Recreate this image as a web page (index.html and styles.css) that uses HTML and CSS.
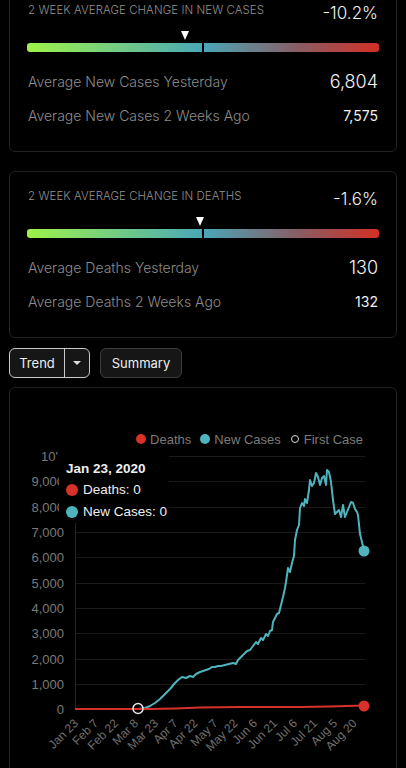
FILE: index.html
```html
<!DOCTYPE html>
<html>
	<head>
		<meta charset="UTF-8">
		<title>Trend</title>
		<link rel="stylesheet" href="styles.css">
	</head>
	<body>
		<div class="page">
			<section class="stat-card">
				<div class="stat-head">
					<span class="stat-title">2 Week Average Change in New Cases</span>
					<span class="stat-pct">-10.2%</span>
				</div>
				<div class="meter">
					<span class="meter-mark" style="left: 44.9%"></span>
					<div class="meter-bar"><span class="meter-good"></span><span class="meter-bad"></span></div>
				</div>
				<div class="stat-row">
					<span class="stat-label">Average New Cases Yesterday</span>
					<span class="stat-big">6,804</span>
				</div>
				<div class="stat-row stat-row-sub">
					<span class="stat-label">Average New Cases 2 Weeks Ago</span>
					<span class="stat-small">7,575</span>
				</div>
			</section>

			<section class="stat-card">
				<div class="stat-head">
					<span class="stat-title">2 Week Average Change in Deaths</span>
					<span class="stat-pct">-1.6%</span>
				</div>
				<div class="meter">
					<span class="meter-mark" style="left: 49.1%"></span>
					<div class="meter-bar"><span class="meter-good"></span><span class="meter-bad"></span></div>
				</div>
				<div class="stat-row">
					<span class="stat-label">Average Deaths Yesterday</span>
					<span class="stat-big">130</span>
				</div>
				<div class="stat-row stat-row-sub">
					<span class="stat-label">Average Deaths 2 Weeks Ago</span>
					<span class="stat-small">132</span>
				</div>
			</section>

			<div class="tabs">
				<div class="tab-group">
					<a class="tab tab-main" href="javascript:;">Trend</a>
					<a class="tab tab-caret" href="javascript:;"><span class="caret"></span></a>
				</div>
				<a class="tab tab-plain" href="javascript:;">Summary</a>
			</div>

			<section class="chart-card">
				<div class="legend">
					<span class="legend-dot dot-deaths"></span><span class="legend-text">Deaths</span>
					<span class="legend-dot dot-cases"></span><span class="legend-text">New Cases</span>
					<span class="legend-dot dot-first"></span><span class="legend-text">First Case</span>
				</div>

				<svg class="plot" width="386" height="330" viewBox="10 447 386 330">
					<!-- grid -->
					<g stroke="#1a1a1a" stroke-width="1">
						<line x1="75" y1="456.5" x2="365" y2="456.5"/>
						<line x1="75" y1="481.5" x2="365" y2="481.5"/>
						<line x1="75" y1="507.5" x2="365" y2="507.5"/>
						<line x1="75" y1="532.5" x2="365" y2="532.5"/>
						<line x1="75" y1="557.5" x2="365" y2="557.5"/>
						<line x1="75" y1="583.5" x2="365" y2="583.5"/>
						<line x1="75" y1="608.5" x2="365" y2="608.5"/>
						<line x1="75" y1="633.5" x2="365" y2="633.5"/>
						<line x1="75" y1="659.5" x2="365" y2="659.5"/>
						<line x1="75" y1="684.5" x2="365" y2="684.5"/>
					</g>
					<line x1="75.5" y1="456" x2="75.5" y2="709" stroke="#242424"/>

					<g class="y-labels" text-anchor="end">
						<text x="58" y="461">10'</text>
						<text x="64" y="486">9,000</text>
						<text x="64" y="512">8,000</text>
						<text x="64" y="537">7,000</text>
						<text x="64" y="562">6,000</text>
						<text x="64" y="588">5,000</text>
						<text x="64" y="613">4,000</text>
						<text x="64" y="638">3,000</text>
						<text x="64" y="664">2,000</text>
						<text x="64" y="689">1,000</text>
						<text x="64" y="714">0</text>
					</g>

					<g class="x-labels" text-anchor="end">
						<text transform="translate(79 724) rotate(-45)">Jan 23</text>
						<text transform="translate(99 724) rotate(-45)">Feb 7</text>
						<text transform="translate(119 724) rotate(-45)">Feb 22</text>
						<text transform="translate(139 724) rotate(-45)">Mar 8</text>
						<text transform="translate(159 724) rotate(-45)">Mar 23</text>
						<text transform="translate(178.5 724) rotate(-45)">Apr 7</text>
						<text transform="translate(198.5 724) rotate(-45)">Apr 22</text>
						<text transform="translate(218.5 724) rotate(-45)">May 7</text>
						<text transform="translate(238.5 724) rotate(-45)">May 22</text>
						<text transform="translate(258 724) rotate(-45)">Jun 6</text>
						<text transform="translate(278 724) rotate(-45)">Jun 21</text>
						<text transform="translate(298 724) rotate(-45)">Jul 6</text>
						<text transform="translate(318 724) rotate(-45)">Jul 21</text>
						<text transform="translate(338 724) rotate(-45)">Aug 5</text>
						<text transform="translate(357.5 724) rotate(-45)">Aug 20</text>
					</g>

					<!-- new cases -->
					<polyline fill="none" stroke="#4fb3bd" stroke-width="2" stroke-linejoin="round"
						points="75,709 138,709 145,708 150,706 155,703 160,699 165,694 170,689 175,683 178,680 182,677 186,678 190,676 193,677 196,674 200,672 203,671 206,670 209,669 212,667 215,667 218,666 221,666 225,665 229,664 233,663 236,664 238,660 241,657 244,654 247,651 250,650 253,646 256,642 258,644 261,638 263,640 266,634 268,636 270,631 272,630 273,622 275,618 277,614 279,613 281,605 283,597 285,588 286,582 288,568 290,572 292,563 294,556 295,540 297,530 299,525 300,508 302,503 304,506 305,499 307,503 309,490 310,480 312,486 314,483 316,473 318,477 320,485 322,478 324,476 326,485 327,470 329,472 331,482 333,500 335,514 337,512 339,510 341,517 343,505 345,517 347,512 349,507 351,502 353,503 355,509 357,512 358,515 360,534 362,542 364,551"/>
					<!-- deaths -->
					<polyline fill="none" stroke="#d7312a" stroke-width="2"
						points="75,709 150,709 175,708.5 200,707.5 240,707 300,707 330,706.5 364,705.5"/>

					<circle cx="138" cy="708.5" r="5" fill="none" stroke="#e8e8e8" stroke-width="1.5"/>
					<circle cx="364" cy="551" r="5.5" fill="#4fb3bd"/>
					<circle cx="364" cy="706" r="5.5" fill="#d7312a"/>
				</svg>

				<div class="tip">
					<div class="tip-title">Jan 23, 2020</div>
					<div class="tip-row"><span class="tip-dot dot-deaths"></span>Deaths: 0</div>
					<div class="tip-row"><span class="tip-dot dot-cases"></span>New Cases: 0</div>
				</div>
			</section>
		</div>
	</body>
</html>
```

FILE: styles.css
```css
*{
	margin: 0;
	padding: 0;
	box-sizing: border-box;
}
body{
	background: #000;
	color: #eee;
	font-family: Inter, "Noto Sans", sans-serif;
	overflow: hidden;
}
.page{
	margin-top: -15px;
	padding: 0 9px;
}

/* stat cards */
.stat-card{
	border: 1px solid #222;
	border-radius: 6px;
	padding: 17px 18px 23px;
	margin-bottom: 19px;
}
.stat-head{
	display: flex;
	justify-content: space-between;
	align-items: flex-start;
}
.stat-title{
	font-size: 11.4px;
	line-height: 14px;
	font-weight: 300;
	text-transform: uppercase;
	letter-spacing: 0.1px;
	color: #929292;
}
.stat-pct{
	font-size: 17px;
	line-height: 20px;
	font-weight: 300;
	color: #f2f2f2;
}
.meter{
	position: relative;
	margin: 8px -1px 0;
	padding-top: 12px;
}
.meter-mark{
	position: absolute;
	top: 0;
	width: 0;
	height: 0;
	margin-left: -4px;
	border-left: 4px solid transparent;
	border-right: 4px solid transparent;
	border-top: 9px solid #fff;
}
.meter-bar{
	display: flex;
	gap: 2px;
	height: 9px;
}
.meter-good{
	flex: 1;
	border-radius: 3px 0 0 3px;
	background: linear-gradient(to right, #9ef24a, #4aa8b8);
}
.meter-bad{
	flex: 1;
	border-radius: 0 3px 3px 0;
	background: linear-gradient(to right, #4aa6b8, #8b5b62 55%, #d23024);
}
.stat-row{
	display: flex;
	justify-content: space-between;
	align-items: center;
	line-height: 24px;
	margin-top: 18px;
}
.stat-row-sub{
	margin-top: 10px;
}
.stat-label{
	font-size: 14px;
	font-weight: 300;
	color: #8c8c8c;
}
.stat-big{
	font-size: 18px;
	font-weight: 300;
	color: #f4f4f4;
}
.stat-small{
	font-size: 14px;
	color: #f0f0f0;
}

/* tabs */
.tabs{
	display: flex;
	gap: 10px;
	margin-top: -9px;
}
.tab-group{
	display: flex;
	border: 1px solid #c9c9c9;
	border-radius: 6px;
	background: #161616;
}
.tab{
	display: flex;
	align-items: center;
	justify-content: center;
	height: 30px;
	font-size: 13px;
	color: #eee;
	text-decoration: none;
}
.tab-main{
	width: 55px;
	height: 28px;
	border-right: 1px solid #c9c9c9;
}
.tab-caret{
	width: 24px;
	height: 28px;
}
.caret{
	width: 0;
	height: 0;
	border-left: 4px solid transparent;
	border-right: 4px solid transparent;
	border-top: 4px solid #ddd;
}
.tab-plain{
	width: 82px;
	border: 1px solid #3c3c3c;
	border-radius: 6px;
	background: #161616;
}

/* chart */
.chart-card{
	position: relative;
	margin-top: 9px;
	height: 420px;
	border: 1px solid #222;
	border-radius: 6px;
	padding-top: 43px;
	font-family: "Liberation Sans", Arial, sans-serif;
}
.legend{
	display: flex;
	justify-content: flex-end;
	align-items: center;
	height: 16px;
	padding-right: 33px;
	font-size: 13px;
	color: #7b7b7b;
}
.legend-dot{
	width: 10px;
	height: 10px;
	border-radius: 50%;
	margin: 0 4px 0 9px;
}
.dot-deaths{
	background: #d7312a;
}
.dot-cases{
	background: #4fb3bd;
}
.dot-first{
	width: 8px;
	height: 8px;
	border: 1.5px solid #ddd;
	margin: 0 5px 0 10px;
}
.plot{
	display: block;
}
.y-labels text{
	font-size: 13px;
	fill: #7a7a7a;
}
.x-labels text{
	font-size: 12px;
	fill: #707070;
}
.tip{
	position: absolute;
	left: 49px;
	top: 60px;
	width: 110px;
	height: 75px;
	padding: 12px 0 0 7px;
	background: #000;
	font-size: 13.5px;
	color: #eee;
}
.tip-title{
	font-weight: bold;
	line-height: 18px;
	margin-bottom: 1px;
}
.tip-row{
	display: flex;
	align-items: center;
	gap: 5px;
	line-height: 22px;
}
.tip-dot{
	width: 12px;
	height: 12px;
	border-radius: 50%;
}
```
